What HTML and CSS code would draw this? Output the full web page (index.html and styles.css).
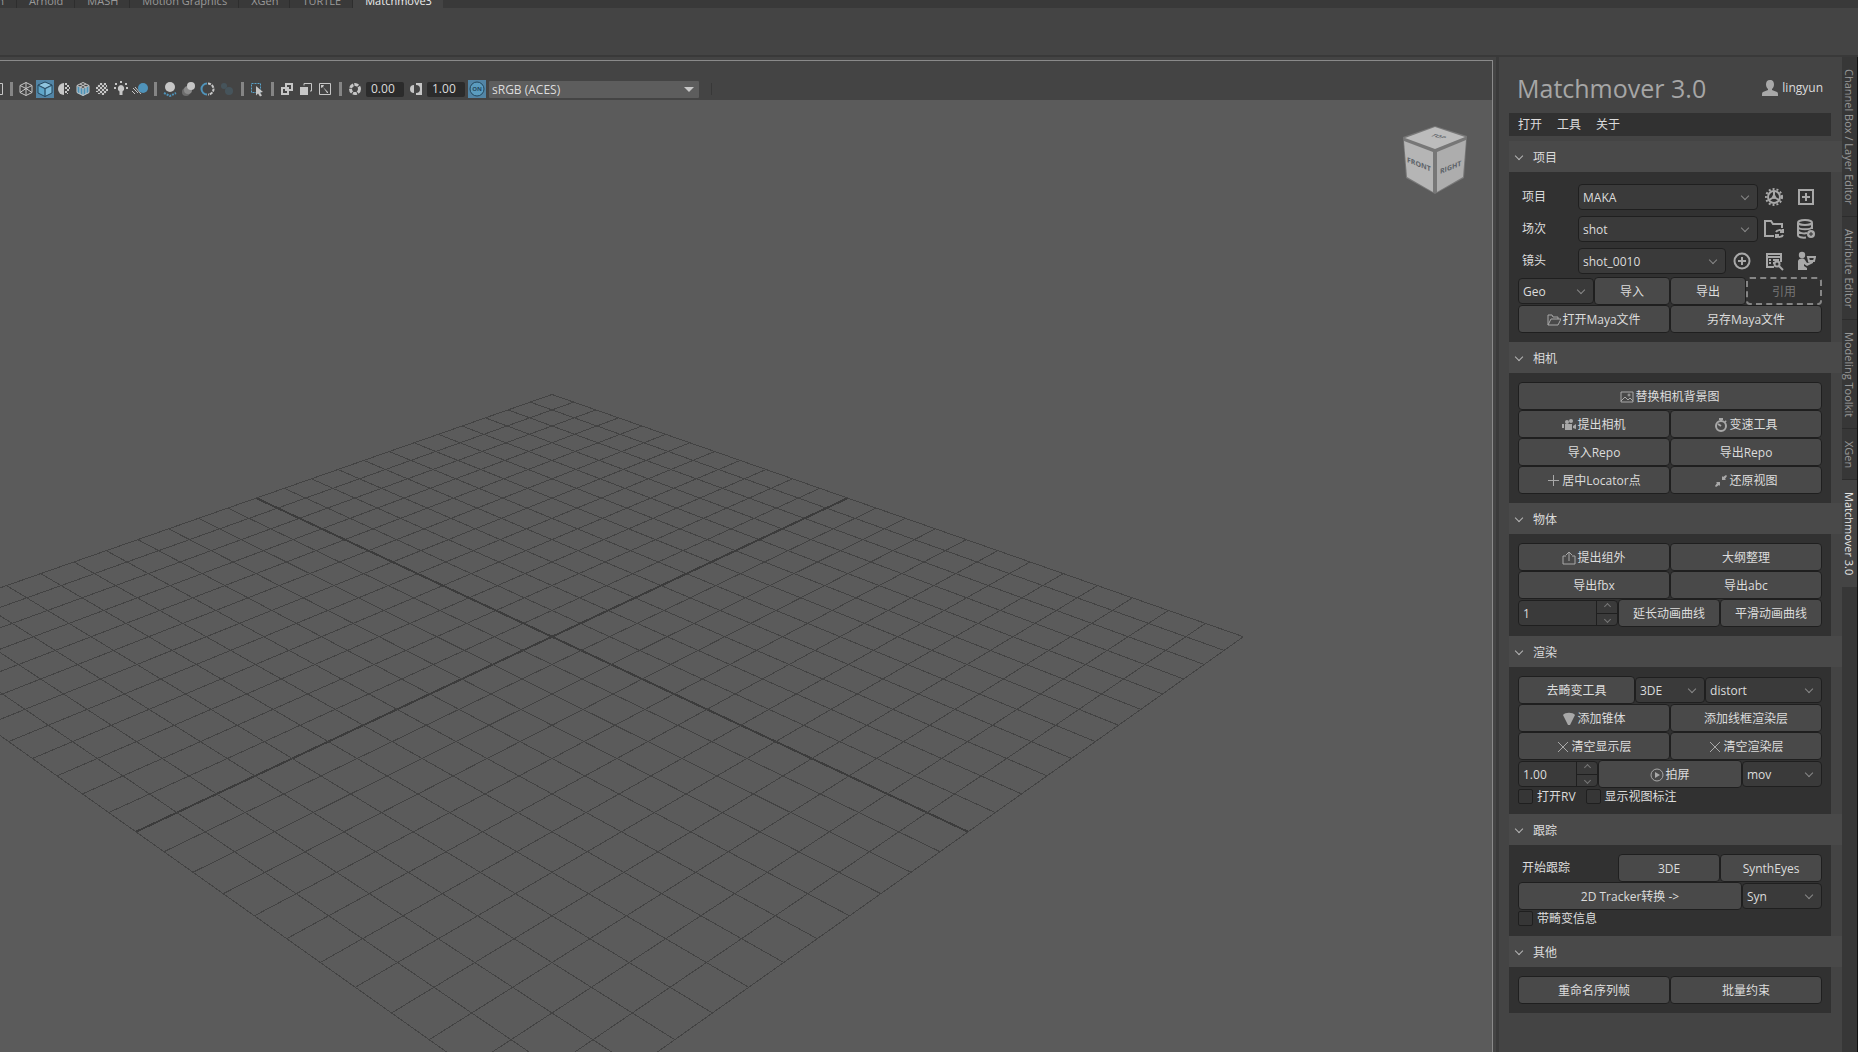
FILE: index.html
```html
<!DOCTYPE html>
<html lang="zh-CN">
  <head>
    <meta charset="UTF-8" />
    <meta name="viewport" content="width=device-width, initial-scale=1.0" />
    <title>Matchmover 3.0</title>
    <link rel="stylesheet" href="styles.css">
  </head>
  <body>
    <nav class="shelf-tabs">
      <a href="#" class="cut">n</a>
      <a href="#">Arnold</a>
      <a href="#">MASH</a>
      <a href="#">Motion Graphics</a>
      <a href="#">XGen</a>
      <a href="#">TURTLE</a>
      <a href="#" class="active">Matchmove3</a>
    </nav>
    <div class="shelf"></div>
    <div class="workspace">
      <main class="view">
        <div class="toolbar">
          <button class="tool first" aria-label="gate"><svg width="4" height="18"><path d="M0 3.500h2.500v11H0" class="ln"/></svg></button>
          <i class="sep"></i>
          <button class="tool" aria-label="wireframe"><svg viewBox="0 0 18 18"><path class="ln" d="M9 2.500l6 3v7l-6 3-6-3v-7zM3 5.500l6 3 6-3M9 8.500v7M9 2.500v6M3 12.500l6-4 6 4"/></svg></button>
          <button class="tool on" aria-label="shaded"><svg viewBox="0 0 18 18"><path fill="#8fc4de" d="M9 2l7 3-7 3.500L2 5z"/><path fill="#5fa6c9" d="M2 6l6.500 3.200V16L2 13z"/><path fill="#7bb8d6" d="M16 6L9.500 9.200V16l6.500-3z"/><path d="M9 2l7 3v8l-7 3.500L2 13V5zM2 5l7 3.500L16 5M9 8.500v8" fill="none" stroke="#24465c"/></svg></button>
          <button class="tool" aria-label="default material"><svg viewBox="0 0 18 18"><path class="fl" d="M9 3a6 6 0 0 0 0 12z"/><path class="fl" d="M10 3h2v2h-2zM12 5h2v2h-2zM10 7h2v2h-2zM12 9h2v2h-2zM10 11h2v2h-2zM14 7h1v2h-1zM12 13h1v1h-1z"/></svg></button>
          <button class="tool" aria-label="wireframe on shaded"><svg viewBox="0 0 18 18"><path fill="#4c93b8" d="M3 6l6 3 6-3v7l-6 3-6-3z"/><path class="ln" d="M9 2.500l6 3v7l-6 3-6-3v-7zM3 5.500l6 3 6-3M9 8.500v7M6 4l6 3v7M12 4L6 7v7"/></svg></button>
          <button class="tool" aria-label="textured"><svg viewBox="0 0 18 18"><circle cx="9" cy="9" r="6" fill="#555"/><path class="fl" d="M7 3h2v2H7zM11 3h2v2h-2zM5 5h2v2H5zM9 5h2v2H9zM13 5h1v2h-1zM3 7h2v2H3zM7 7h2v2H7zM11 7h2v2h-2zM5 9h2v2H5zM9 9h2v2H9zM13 9h2v2h-2zM3 11h2v1H3zM7 11h2v2H7zM11 11h2v2h-2zM5 13h2v1H5zM9 13h2v2H9z"/></svg></button>
          <button class="tool" aria-label="lights"><svg viewBox="0 0 18 18"><path class="fl" d="M9 5a3.500 3.500 0 0 0-1.500 6.500V15h3v-3.500A3.500 3.500 0 0 0 9 5zM8 1h2v2H8zM2 7h2v2H2zM14 7h2v2h-2zM3 3h2v2H3zM13 3h2v2h-2z"/></svg></button>
          <button class="tool" aria-label="motion blur"><svg viewBox="0 0 18 18"><path d="M2 8l5 5M1 11l3 3M4 7l6 7" class="ln"/><circle cx="12" cy="8" r="5" fill="#4f93ba"/></svg></button>
          <i class="sep"></i>
          <button class="tool" aria-label="shadows"><svg viewBox="0 0 18 18"><path fill="none" stroke="#4f93ba" stroke-width="2" stroke-dasharray="2 1" d="M3 13l6 3 6-3"/><circle class="fl" cx="9" cy="7" r="5"/></svg></button>
          <button class="tool" aria-label="occlusion"><svg viewBox="0 0 18 18"><circle cx="6" cy="12" r="4" fill="#6c6c6c"/><circle cx="8" cy="10" r="4" fill="#8a8a8a"/><circle class="fl" cx="11" cy="6" r="4"/></svg></button>
          <button class="tool" aria-label="anti-aliasing"><svg viewBox="0 0 18 18"><path d="M8 3.500a5.500 5.500 0 0 0 0 11" fill="none" stroke="#4f93ba" stroke-width="2"/><path d="M9 3.500a5.500 5.500 0 0 1 0 11" fill="none" stroke="#c6c6c6" stroke-width="2" stroke-dasharray="3 1"/></svg></button>
          <button class="tool dim" aria-label="depth of field"><svg viewBox="0 0 18 18"><circle cx="6" cy="6" r="3" fill="#4f93ba"/><circle cx="11" cy="11" r="4" fill="#4f93ba"/></svg></button>
          <i class="sep"></i>
          <button class="tool" aria-label="isolate select"><svg viewBox="0 0 18 18"><path d="M3.500 3.500h9v9h-9z" fill="none" stroke="#58a3ca" stroke-dasharray="2 1"/><path class="fl" d="M8 6l7 6-3 .5 2 3-2 1-2-3-2 2z"/></svg></button>
          <i class="sep"></i>
          <button class="tool" aria-label="xray"><svg viewBox="0 0 18 18"><path class="fl" fill-rule="evenodd" d="M7 3h8v8h-4v4H3V7h4zM9 5v2h2v2h2V5zM5 9v4h4v-2H7V9z"/></svg></button>
          <button class="tool" aria-label="xray joints"><svg viewBox="0 0 18 18"><path class="fl" d="M3 7h8v8H3z"/><path class="ln" d="M7 5.500v-2h7.500v7.500H13"/></svg></button>
          <button class="tool" aria-label="exposure"><svg viewBox="0 0 18 18"><path d="M3.500 3.500h11v11h-11z" class="ln"/><path class="fl" d="M5 5h3l-1 2 5 5v1h-1L7 7 5 8z"/></svg></button>
          <i class="sep"></i>
          <button class="tool wide" aria-label="aperture"><svg viewBox="0 0 18 18"><circle cx="9" cy="9" r="4.500" fill="none" stroke="#c6c6c6" stroke-width="3" stroke-dasharray="4 1"/></svg></button>
          <input class="num" type="text" value="0.00" aria-label="exposure value" />
          <button class="tool wide" aria-label="contrast"><svg viewBox="0 0 18 18"><path class="fl" d="M7 5v8a4 4 0 0 1 0-8z"/><path class="fl" d="M9 3h6v12H9v-2a4 4 0 0 0 0-8z"/></svg></button>
          <input class="num" type="text" value="1.00" aria-label="gamma value" />
          <button class="tool on view-on" aria-label="color management"><svg viewBox="0 0 18 18"><circle cx="9" cy="9" r="7" fill="#5b9cbf" stroke="#24465c"/><text x="9" y="11" text-anchor="middle">ON</text></svg></button>
          <span class="combo space">
            <select aria-label="color space"><option>sRGB (ACES)</option></select>
          </span>
          <i class="handle"></i>
        </div>
        <div class="viewport">
          <svg class="grid" id="grid"></svg>
          <svg class="cube" viewBox="0 0 70 74">
            <path d="M35 2L3 13l3 41 29 16 29-16 3-42z" fill="#777"/>
            <path d="M35 3l30 10-30 12L5 14z" fill="#bcbcbc"/>
            <path d="M4 17l29 11v40L7 53z" fill="#b5b5b5"/>
            <path d="M66 16L37 28v40l26-15z" fill="#adadad"/>
            <text transform="matrix(1 .4 0 1 7 38)">FRONT</text>
            <text transform="matrix(1 -.4 0 1 40 50)">RIGHT</text>
            <text transform="matrix(.9 .2 -.9 .4 30 12)">TOP</text>
          </svg>
        </div>
      </main>

      <aside class="panel">
        <header class="head">
          <h1>Matchmover 3.0</h1>
          <span class="user">
            <svg viewBox="0 0 16 16"><path class="ic" d="M8 0c3 0 4 2 4 4.500C12 7 11 8 10 9v1l5 2c1 .5 1 1.500 1 4H0c0-2.500 0-3.500 1-4l5-2V9C5 8 4 7 4 4.500 4 2 5 0 8 0z"/></svg>
            lingyun
          </span>
        </header>
        <nav class="menu">
          <a href="#">打开</a>
          <a href="#">工具</a>
          <a href="#">关于</a>
        </nav>

        <details open>
          <summary>项目</summary>
          <div class="group">
            <div class="field">
              <label for="project">项目</label>
              <span class="combo"><select id="project"><option>MAKA</option></select></span>
              <button class="icon" aria-label="设置"><svg viewBox="0 0 20 20"><circle cx="10" cy="10" r="6" class="st"/><circle cx="10" cy="10" r="8" class="st teeth"/><path class="st" d="M10 4v5M10 10l-5 3M10 10l5 3"/><circle class="ic" cx="10" cy="10" r="2"/></svg></button>
              <button class="icon" aria-label="新建项目"><svg viewBox="0 0 20 20"><path class="st" d="M3 3h14v14H3zM10 6v8M6 10h8"/></svg></button>
            </div>
            <div class="field">
              <label for="scene">场次</label>
              <span class="combo"><select id="scene"><option>shot</option></select></span>
              <button class="icon" aria-label="刷新目录"><svg viewBox="0 0 20 20"><path class="st" d="M10 17H1V2h6l2 3h9v4M12 13c1-2 5-3 7 0M19 10v3h-3M19 16c-1 2-5 3-7 0M12 19v-3h3"/></svg></button>
              <button class="icon" aria-label="数据库"><svg viewBox="0 0 20 20"><ellipse cx="9" cy="3.500" rx="7" ry="2.500" class="st"/><path class="st" d="M2 4v12c0 2 4 3 8 2.500M16 4v6M2 8c1 3 13 3 14 0M2 12c1 2 6 3 9 2"/><circle class="ic" cx="15" cy="15" r="4"/><path d="M15 13v4M13 15h4" stroke="#313131"/></svg></button>
            </div>
            <div class="field">
              <label for="shot">镜头</label>
              <span class="combo"><select id="shot"><option>shot_0010</option></select></span>
              <button class="icon" aria-label="新建镜头"><svg viewBox="0 0 20 20"><circle cx="10" cy="10" r="7.500" class="st"/><path class="st" d="M10 6v8M6 10h8"/></svg></button>
              <button class="icon" aria-label="查找镜头"><svg viewBox="0 0 20 20"><path class="st" d="M10 16H3V3h14v8M3 6h14M5 9h2M9 9h6M5 12h2M9 12h2"/><circle cx="13" cy="13" r="2.500" class="st"/><path class="st" d="M15 15l4 4"/></svg></button>
              <button class="icon" aria-label="分配"><svg viewBox="0 0 20 20"><circle class="ic" cx="6" cy="4" r="3.200"/><path class="ic" d="M2 10c1-3 6-3 7-1l2 3 6-2v2l-6 3-3-2v2l3 2v2H2z"/><path class="st" d="M12 6h7l-1 4h-5z"/></svg></button>
            </div>
            <div class="row four">
              <span class="combo"><select aria-label="类型"><option>Geo</option></select></span>
              <button>导入</button>
              <button>导出</button>
              <button class="ref" disabled>引用</button>
            </div>
            <div class="row">
              <button><svg viewBox="0 0 14 14"><path class="th" d="M1 12V2h4l1 2h5v2M1 12l3-6h10l-3 6z"/></svg>打开Maya文件</button>
              <button>另存Maya文件</button>
            </div>
          </div>
        </details>

        <details open>
          <summary>相机</summary>
          <div class="group">
            <div class="row">
              <button><svg viewBox="0 0 14 14"><path class="th" d="M1 2h12v10H1zM1 11l4-4 3 3 2-2 3 3"/><circle class="th" cx="9" cy="5" r="1"/></svg>替换相机背景图</button>
            </div>
            <div class="row">
              <button><svg viewBox="0 0 14 14"><circle class="ic" cx="5" cy="4" r="2"/><circle class="ic" cx="9" cy="3" r="2"/><path class="ic" d="M3 6h7v6H3zM11 8l3-2v5l-3-1zM0 6h2v4H0z"/></svg>提出相机</button>
              <button><svg viewBox="0 0 14 14"><circle cx="7" cy="8" r="5" class="st"/><path class="st" d="M5 1h4M7 1v2M7 8L4 6M11 3l1 1"/></svg>变速工具</button>
            </div>
            <div class="row">
              <button>导入Repo</button>
              <button>导出Repo</button>
            </div>
            <div class="row">
              <button><svg viewBox="0 0 14 14"><path class="th" d="M6.500 1v11M1 6.500h11"/></svg>居中Locator点</button>
              <button><svg viewBox="0 0 14 14"><path class="ic" d="M8 2v4h4l-1-1 2-3-1-1-3 2zM6 12V8H2l1 1-2 3 1 1 3-2z"/></svg>还原视图</button>
            </div>
          </div>
        </details>

        <details open>
          <summary>物体</summary>
          <div class="group">
            <div class="row">
              <button><svg viewBox="0 0 14 14"><path class="th" d="M4 5H1v8h12V5h-3M7 10V1M4 4l3-3 3 3"/></svg>提出组外</button>
              <button>大纲整理</button>
            </div>
            <div class="row">
              <button>导出fbx</button>
              <button>导出abc</button>
            </div>
            <div class="row curve">
              <span class="spin">
                <input type="text" value="1" aria-label="帧数" />
                <span><button class="up" aria-label="增加"></button><button class="down" aria-label="减少"></button></span>
              </span>
              <button>延长动画曲线</button>
              <button>平滑动画曲线</button>
            </div>
          </div>
        </details>

        <details open>
          <summary>渲染</summary>
          <div class="group">
            <div class="row distort">
              <button>去畸变工具</button>
              <span class="combo"><select aria-label="软件"><option>3DE</option></select></span>
              <span class="combo"><select aria-label="模式"><option>distort</option></select></span>
            </div>
            <div class="row">
              <button><svg viewBox="0 0 14 14"><path class="ic" d="M1 3c2-3 10-3 12 0L8 13H6z"/></svg>添加锥体</button>
              <button>添加线框渲染层</button>
            </div>
            <div class="row">
              <button><svg viewBox="0 0 14 14"><path class="th" d="M2 2l10 10M12 2L2 12"/></svg>清空显示层</button>
              <button><svg viewBox="0 0 14 14"><path class="th" d="M2 2l10 10M12 2L2 12"/></svg>清空渲染层</button>
            </div>
            <div class="row shoot">
              <span class="spin">
                <input type="text" value="1.00" aria-label="缩放" />
                <span><button class="up" aria-label="增加"></button><button class="down" aria-label="减少"></button></span>
              </span>
              <button><svg viewBox="0 0 14 14"><circle cx="7" cy="7" r="6" class="th"/><path class="ic" d="M5 4l5 3-5 3z"/></svg>拍屏</button>
              <span class="combo"><select aria-label="格式"><option>mov</option></select></span>
            </div>
            <div class="checks">
              <label><input type="checkbox" />打开RV</label>
              <label><input type="checkbox" />显示视图标注</label>
            </div>
          </div>
        </details>

        <details open>
          <summary>跟踪</summary>
          <div class="group">
            <div class="row curve">
              <span class="text">开始跟踪</span>
              <button>3DE</button>
              <button>SynthEyes</button>
            </div>
            <div class="row tracker">
              <button>2D Tracker转换 -&gt;</button>
              <span class="combo"><select aria-label="目标"><option>Syn</option></select></span>
            </div>
            <div class="checks">
              <label><input type="checkbox" />带畸变信息</label>
            </div>
          </div>
        </details>

        <details open>
          <summary>其他</summary>
          <div class="group">
            <div class="row">
              <button>重命名序列帧</button>
              <button>批量约束</button>
            </div>
          </div>
        </details>
      </aside>

      <nav class="side-tabs">
        <a href="#">Channel Box / Layer Editor</a>
        <a href="#">Attribute Editor</a>
        <a href="#">Modeling Toolkit</a>
        <a href="#">XGen</a>
        <a href="#" class="active">Matchmover 3.0</a>
      </nav>
    </div>
    <script>
      // 透视网格：a、b 为地面坐标，每边 24 格
      var HALF = 12;
      var grid = document.querySelector("#grid");

      function project(a, b) {
        var w = 1 - 0.0141 * (a + b);
        var x = 552 + (28.81 * (a - b)) / w;
        var y = (636.7 + 4.53 * (a + b)) / w - 100;
        return x.toFixed(1) + " " + y.toFixed(1);
      }
      function addPath(d, name) {
        var path = document.createElementNS("http://www.w3.org/2000/svg", "path");
        path.setAttribute("d", d);
        path.setAttribute("class", name);
        grid.appendChild(path);
      }
      for (var i = -HALF; i <= HALF; i++) {
        var name = i === 0 ? "axis" : "line";
        addPath("M" + project(i, -HALF) + "L" + project(i, HALF), name);
        addPath("M" + project(-HALF, i) + "L" + project(HALF, i), name);
      }
    </script>
  </body>
</html>
```
FILE: styles.css
```css
* {
  box-sizing: border-box;
  margin: 0;
  padding: 0;
}
html,
body {
  height: 100%;
}
body {
  display: flex;
  flex-direction: column;
  overflow: hidden;
  background: #444;
  color: #dcdcdc;
  font-family: "Open Sans", "Noto Sans CJK SC", sans-serif;
  font-size: 12px;
  line-height: 16px;
}
a {
  color: inherit;
  text-decoration: none;
}
button,
input,
select {
  font: inherit;
  color: inherit;
  outline: none;
  border: none;
  background: none;
}

/* 顶部工具架 */
.shelf-tabs {
  display: flex;
  align-items: flex-end;
  height: 8px;
  flex: none;
  overflow: hidden;
  color: #999;
  font-size: 11px;
  line-height: 14px;
}
.shelf-tabs a {
  padding: 0 11px 0 12px;
  background: #393939;
  border-right: 1px solid #2e2e2e;
}
.shelf-tabs::after {
  content: "";
  flex: 1;
  height: 8px;
  background: #393939;
}
.shelf-tabs .cut {
  width: 17px;
  padding: 0 12px 0 0;
  direction: rtl;
}
.shelf-tabs .active {
  color: #eee;
  background: #444;
  border: none;
}
.shelf {
  flex: none;
  height: 49px;
  border-bottom: 2px solid #393939;
}
.workspace {
  flex: 1;
  display: flex;
  min-height: 0;
  border-right: 1px solid #111;
}

/* 视图 */
.view {
  flex: 1;
  min-width: 0;
  display: flex;
  flex-direction: column;
  margin-top: 3px;
  border-top: 1px solid #8a8a8a;
  border-right: 1px solid #8a8a8a;
}
.toolbar {
  display: flex;
  align-items: center;
  height: 39px;
  padding-top: 17px;
  flex: none;
}
.tool {
  flex: none;
  width: 19px;
  height: 18px;
}
.tool svg {
  display: block;
  width: 18px;
  height: 18px;
}
.tool.first {
  width: 6px;
}
.tool.first svg {
  width: 4px;
}
.tool.wide {
  width: 20px;
}
.tool.on {
  width: 18px;
  margin-right: 1px;
  background: #5285a6;
}
.tool.dim {
  opacity: 0.2;
}
.tool .ln {
  fill: none;
  stroke: #c6c6c6;
}
.tool .fl {
  fill: #c6c6c6;
}
.tool text {
  font-size: 6px;
  font-weight: bold;
  fill: #24465c;
}
.tool.view-on {
  margin-right: 3px;
}
.sep {
  flex: none;
  width: 3px;
  height: 14px;
  margin: 0 4px;
  background: #858585;
}
.num {
  width: 38px;
  height: 15px;
  margin-right: 3px;
  padding-left: 5px;
  background: #2b2b2b;
  border-radius: 2px;
}
.handle {
  width: 3px;
  height: 12px;
  margin-left: 10px;
  border-right: 1px solid #383838;
}
.viewport {
  position: relative;
  flex: 1;
  overflow: hidden;
  background: #5b5b5b;
}
.grid {
  position: absolute;
  top: 0;
  left: 0;
  width: 100%;
  height: 100%;
  shape-rendering: crispEdges;
}
.grid .line {
  fill: none;
  stroke: #434343;
}
.grid .axis {
  fill: none;
  stroke: #3c3c3c;
  stroke-width: 2px;
}
.cube {
  position: absolute;
  top: 24px;
  right: 22px;
  width: 70px;
  height: 74px;
}
.cube text {
  font-size: 7px;
  font-weight: bold;
  fill: #5c6268;
}

/* 下拉框 */
.combo {
  position: relative;
  display: block;
}
.combo select {
  display: block;
  width: 100%;
  height: 26px;
  padding: 1px 4px 0;
  appearance: none;
  background: #3a3a3a;
  border: 1px solid #1f1f1f;
  border-radius: 4px;
}
.combo::after {
  content: "";
  position: absolute;
  top: 9px;
  right: 10px;
  width: 5px;
  height: 5px;
  border: solid #888;
  border-width: 0 1px 1px 0;
  transform: rotate(45deg);
  pointer-events: none;
}
.combo.space {
  width: 210px;
}
.space select {
  height: 17px;
  padding: 0 3px;
  line-height: 15px;
  background: #5d5d5d;
  border: none;
  border-radius: 1px;
}
.space::after {
  top: 6px;
  right: 5px;
  width: 0;
  height: 0;
  border: 5px solid transparent;
  border-top-color: #c8c8c8;
  border-bottom: none;
  transform: none;
}

/* 右侧面板 */
.panel {
  flex: none;
  width: 346px;
  margin-left: 3px;
  padding-left: 10px;
  border-left: 3px solid #3a3a3a;
}
.head {
  display: flex;
  align-items: center;
  justify-content: space-between;
  height: 56px;
  padding: 6px 19px 0 8px;
}
.head h1 {
  font-size: 25px;
  font-weight: normal;
  line-height: 32px;
  color: #a6a6a6;
}
.user {
  display: flex;
  align-items: center;
  gap: 4px;
}
.user svg {
  width: 16px;
  height: 16px;
}
.menu {
  display: flex;
  gap: 15px;
  height: 23px;
  margin-right: 11px;
  padding: 4px 9px 0;
  background: #313131;
}
.menu + details {
  margin-top: 5px;
}
summary {
  display: flex;
  align-items: center;
  height: 31px;
  padding: 2px 0 0 7px;
  background: #494949;
  list-style: none;
}
summary::before {
  content: "";
  width: 5px;
  height: 5px;
  margin: -4px 11px 0 0;
  border: solid #b5b5b5;
  border-width: 0 1px 1px 0;
  transform: rotate(45deg);
}
.group {
  margin-right: 11px;
  padding: 9px;
  background: #313131;
}
.field {
  display: flex;
  align-items: center;
  height: 32px;
}
.field label {
  width: 60px;
  padding-left: 4px;
}
.field .combo {
  flex: 1;
}
.icon {
  width: 32px;
  height: 20px;
}
.icon svg {
  display: block;
  width: 20px;
  height: 20px;
  margin: 0 auto;
}
.ic {
  fill: #a8a8a8;
}
.st {
  fill: none;
  stroke: #a8a8a8;
  stroke-width: 2px;
}
.icon .teeth {
  stroke-dasharray: 2 2;
}
.th {
  fill: none;
  stroke: #a8a8a8;
}
.row {
  display: grid;
  grid-auto-flow: column;
  grid-auto-columns: 1fr;
  align-items: center;
  height: 28px;
}
.four {
  grid-template-columns: repeat(4, 1fr);
}
.curve {
  grid-template-columns: 100px 1fr 1fr;
}
.distort {
  grid-template-columns: 5fr 3fr 5fr;
}
.shoot {
  grid-template-columns: 80px 1fr 80px;
}
.tracker {
  grid-template-columns: 1fr 80px;
}
.row > button {
  display: flex;
  align-items: center;
  justify-content: center;
  gap: 1px;
  height: 28px;
  padding-top: 2px;
  background: #494949;
  border: 1px solid #1f1f1f;
  border-radius: 4px;
}
.row > button svg {
  width: 14px;
  height: 14px;
}
.row > .ref {
  color: #757575;
  background: none;
  border: 2px dashed #858585;
}
.text {
  padding-left: 4px;
}
.spin {
  display: flex;
  height: 26px;
  background: #3a3a3a;
  border: 1px solid #1f1f1f;
  border-radius: 4px;
}
.spin input {
  flex: 1;
  min-width: 0;
  padding: 2px 0 0 4px;
}
.spin span {
  display: flex;
  flex-direction: column;
  width: 21px;
  border-left: 1px solid #1f1f1f;
}
.spin button {
  flex: 1;
  display: flex;
  align-items: center;
  justify-content: center;
}
.spin .up {
  border-bottom: 1px solid #1f1f1f;
}
.spin button::before {
  content: "";
  width: 4px;
  height: 4px;
  border: solid #777;
  border-width: 1px 0 0 1px;
  transform: rotate(45deg);
}
.spin .down::before {
  transform: rotate(225deg);
}
.checks {
  display: flex;
  gap: 10px;
  height: 17px;
}
.checks label {
  display: flex;
  align-items: center;
  gap: 4px;
}
.checks input {
  width: 15px;
  height: 15px;
  appearance: none;
  background: #363636;
  border: 1px solid #1f1f1f;
  border-radius: 2px;
}

/* 侧边标签 */
.side-tabs {
  flex: none;
  display: flex;
  flex-direction: column;
  width: 15px;
  background: #373737;
  color: #979797;
  font-size: 11px;
  line-height: 15px;
}
.side-tabs a {
  padding: 12px 0 11px;
  writing-mode: vertical-rl;
  border-bottom: 1px solid #2c2c2c;
}
.side-tabs .active {
  color: #e6e6e6;
  background: #444;
  border: none;
}
```
